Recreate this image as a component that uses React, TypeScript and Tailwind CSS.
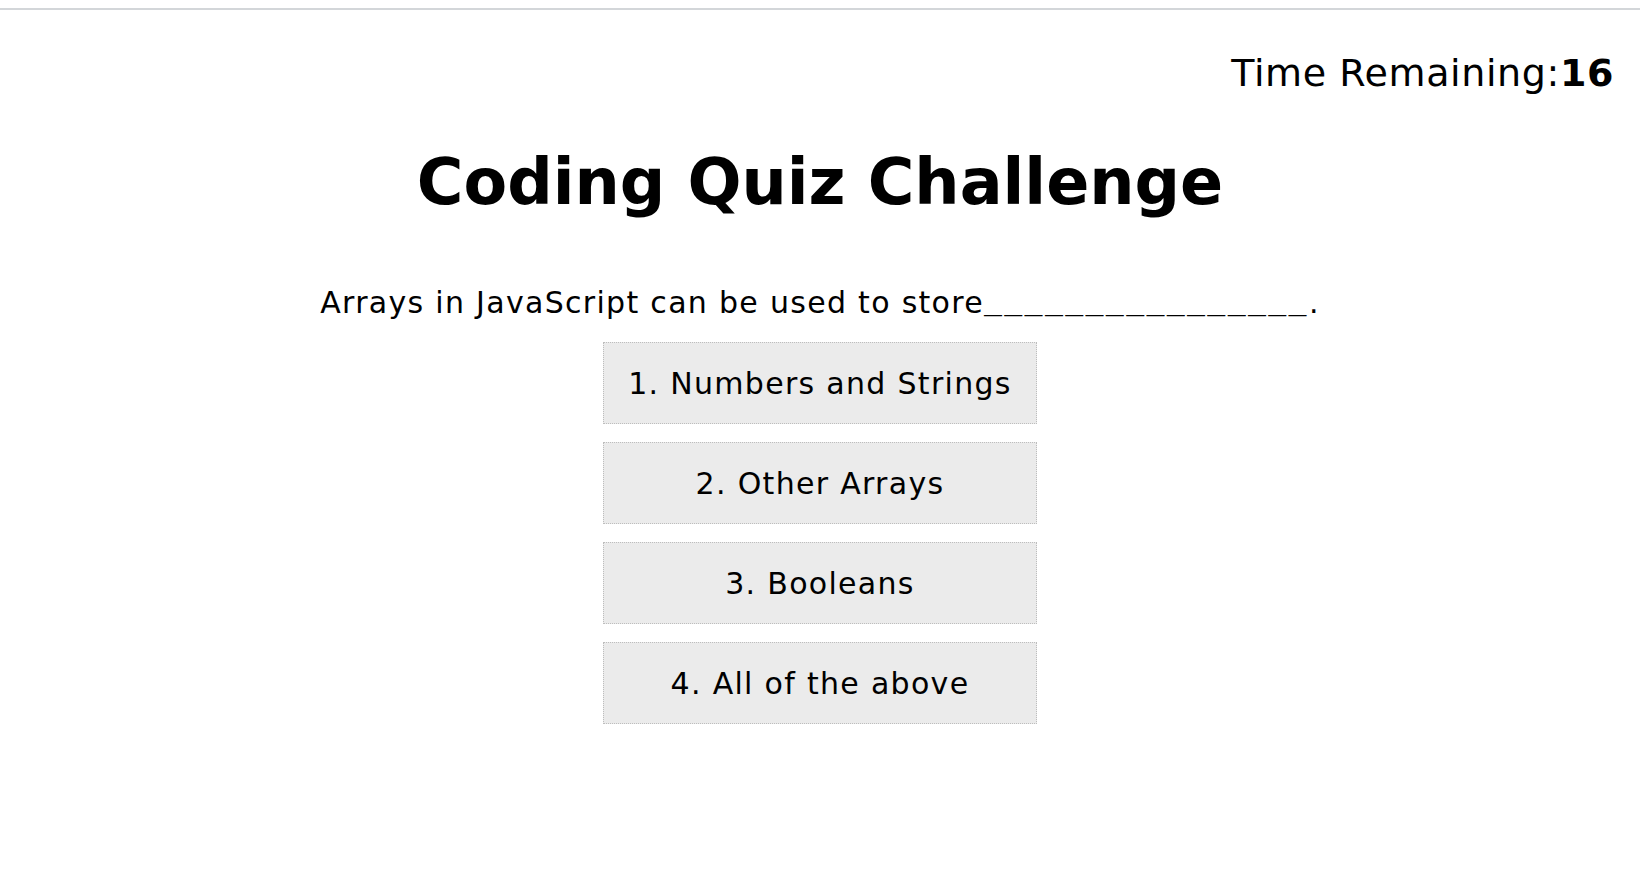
const choices = ["1. Numbers and Strings", "2. Other Arrays", "3. Booleans", "4. All of the above"];

export default function App() {
  return (
    <div className="min-h-screen bg-white font-['DejaVu_Sans',Verdana,sans-serif] text-black">
      <div className="pt-2">
        <div className="border-t-2 border-[#d3d6d9]" />
      </div>

      <header className="mt-[41px] flex justify-end pr-[26px] text-[38px] leading-[44px] tracking-[0.6px]">
        <span>
          Time Remaining:<span className="font-bold">16</span>
        </span>
      </header>

      <main className="flex flex-col items-center">
        <h1 className="mt-[50px] text-[63.6px] font-bold leading-[75px]">Coding Quiz Challenge</h1>

        <p className="mt-[65px] text-[30px] leading-[35px] tracking-[1.3px]">
          Arrays in JavaScript can be used to store
          <span className="font-['Liberation_Mono',monospace] tracking-[2.3px]">________________</span>.
        </p>

        <div className="mt-[19px] flex flex-col items-center gap-[18px]">
          {choices.map((c) => (
            <button
              key={c}
              className="box-border flex h-[82px] w-[434px] items-center justify-center border border-dotted border-[#bdbdbd] bg-[#ebebeb] text-[30px] leading-[35px] tracking-[1.3px]"
            >
              {c}
            </button>
          ))}
        </div>
      </main>
    </div>
  );
}
